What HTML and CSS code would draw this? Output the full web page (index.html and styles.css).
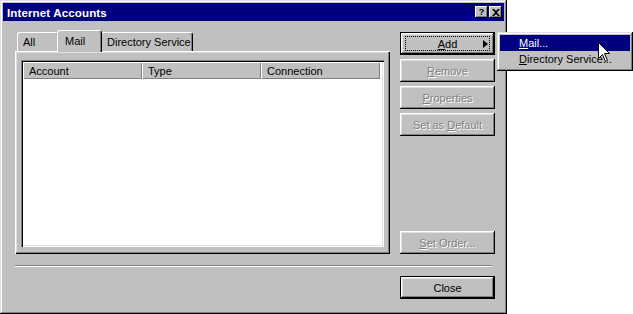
FILE: index.html
```html
<!DOCTYPE html>
<html>
<head>
<meta charset="utf-8">
<link rel="stylesheet" href="styles.css">
</head>
<body>
<div class="window">
  <div class="titlebar">
    <span class="title">Internet Accounts</span>
    <div class="caption-btns">
      <span class="cap-btn">?</span>
      <span class="cap-btn close-x">
        <svg width="8" height="7" viewBox="0 0 8 7"><path d="M0 0h2l2 2 2-2h2L5 3.5 8 7H6L4 5 2 7H0l3-3.5z" fill="#000"/></svg>
      </span>
    </div>
  </div>
  <div class="content">
    <div class="top">
      <div class="tabs-col">
        <div class="tabstrip">
          <div class="tab tab-all">All</div>
          <div class="tab tab-mail active">Mail</div>
          <div class="tab tab-dir">Directory Service</div>
        </div>
        <div class="panel">
          <div class="list">
            <div class="header">
              <div class="hcell c1">Account</div>
              <div class="hcell c2">Type</div>
              <div class="hcell c3">Connection</div>
            </div>
          </div>
        </div>
      </div>
      <div class="btn-col">
        <div class="btn default">
          <div class="focus add-focus">
            <span></span>
            <span class="label"><u>A</u>dd</span>
            <span class="arrow"></span>
          </div>
        </div>
        <div class="btn disabled"><span class="label"><u>R</u>emove</span></div>
        <div class="btn disabled"><span class="label"><u>P</u>roperties</span></div>
        <div class="btn disabled"><span class="label">Set as <u>D</u>efault</span></div>
        <div class="btn disabled bottom-btn"><span class="label"><u>S</u>et Order...</span></div>
      </div>
    </div>
    <div class="separator"></div>
    <div class="footer">
      <div class="btn default"><span class="label">Close</span></div>
    </div>
  </div>
</div>

<div class="menu">
  <div class="item selected"><u>M</u>ail...</div>
  <div class="item"><u>D</u>irectory Service...</div>
</div>

<svg class="cursor" width="13" height="21" viewBox="0 0 13 21">
  <path d="M0.5 0.5 V16.5 L4.5 12.5 L7.5 19.5 L9.5 18.5 L6.5 11.5 H11.5 Z" fill="#fff" stroke="#000" stroke-width="1"/>
</svg>
</body>
</html>
```

FILE: styles.css
```css
html, body {
  margin: 0;
  padding: 0;
  background: #ffffff;
}

body {
  width: 633px;
  height: 314px;
  position: relative;
  overflow: hidden;
  font-family: "Liberation Sans", Arial, sans-serif;
  font-size: 11px;
  color: #000;
}

.window {
  width: 507px;
  height: 314px;
  box-sizing: border-box;
  background: #c0c0c0;
  padding: 3px;
  box-shadow: inset -1px -1px #000, inset 1px 1px #dfdfdf, inset -2px -2px #808080, inset 2px 2px #fff;
  display: flex;
  flex-direction: column;
}

.titlebar {
  height: 18px;
  background: #000080;
  color: #fff;
  display: flex;
  align-items: center;
  justify-content: space-between;
  padding: 0 2px 0 4px;
  flex: none;
}

.title {
  font-weight: bold;
  font-size: 11.6px;
  letter-spacing: 0.1px;
}

.caption-btns {
  display: flex;
  gap: 1px;
}

.cap-btn {
  width: 13px;
  height: 12px;
  background: #c0c0c0;
  box-shadow: inset -1px -1px #000, inset 1px 1px #fff, inset -2px -2px #808080;
  color: #000;
  font-weight: bold;
  font-size: 9px;
  line-height: 12px;
  text-align: center;
  display: flex;
  align-items: center;
  justify-content: center;
}

.content {
  padding: 9px 9px 0 12px;
  display: flex;
  flex-direction: column;
}

.top {
  display: flex;
  gap: 10px;
  height: 224px;
}

.tabs-col {
  width: 375px;
  display: flex;
  flex-direction: column;
}

.tabstrip {
  height: 21px;
  display: flex;
  align-items: flex-end;
  padding-left: 2px;
  position: relative;
  z-index: 1;
}

.tab {
  height: 19px;
  box-sizing: border-box;
  padding: 0 0 0 5px;
  display: flex;
  align-items: center;
  border-top: 1px solid #fff;
  border-left: 1px solid #fff;
  border-right: 1px solid #000;
  border-radius: 3px 3px 0 0;
  box-shadow: inset -1px 0 #808080;
  background: #c0c0c0;
}

.tab-all { width: 42px; }
.tab-dir { width: 93px; padding-left: 6px; }

.tab.active {
  width: 45px;
  height: 22px;
  margin: 0 -2px -1px -2px;
  padding: 0 0 1px 7px;
  position: relative;
  z-index: 2;
}

.panel {
  height: 203px;
  box-sizing: border-box;
  padding: 9px 6px 7px 6px;
  box-shadow: inset 1px 1px #fff, inset -1px -1px #000, inset -2px -2px #808080, inset 2px 2px #dfdfdf;
  display: flex;
}

.list {
  flex: 1;
  background: #fff;
  box-sizing: border-box;
  padding: 2px;
  box-shadow: inset 1px 1px #808080, inset 2px 2px #000, inset -1px -1px #fff, inset -2px -2px #dfdfdf;
}

.header {
  display: flex;
  height: 17px;
}

.hcell {
  box-sizing: border-box;
  height: 17px;
  background: #c0c0c0;
  box-shadow: inset 1px 1px #fff, inset -1px -1px #808080;
  padding-left: 6px;
  display: flex;
  align-items: center;
}

.c1 { width: 119px; }
.c2 { width: 119px; }
.c3 { width: 119px; }

.btn-col {
  width: 95px;
  display: flex;
  flex-direction: column;
  gap: 4px;
  padding-top: 2px;
}

.btn {
  width: 95px;
  height: 23px;
  box-sizing: border-box;
  background: #c0c0c0;
  box-shadow: inset -1px -1px #000, inset 1px 1px #fff, inset -2px -2px #808080, inset 2px 2px #dfdfdf;
  display: flex;
  align-items: center;
  justify-content: center;
  flex: none;
}

.btn.default {
  border: 1px solid #000;
}

.btn.disabled {
  color: #808080;
  text-shadow: 1px 1px #fff;
}

.bottom-btn {
  margin-top: auto;
}

.focus {
  box-sizing: border-box;
  width: 85px;
  height: 15px;
  border: 1px dotted #000;
}

.add-focus {
  display: grid;
  grid-template-columns: 1fr auto 1fr;
  align-items: center;
}

.arrow {
  justify-self: end;
  margin-right: 1px;
  width: 0;
  height: 0;
  border-top: 4px solid transparent;
  border-bottom: 4px solid transparent;
  border-left: 5px solid #000;
}

.separator {
  margin-top: 11px;
  margin-right: 3px;
  height: 2px;
  box-sizing: border-box;
  border-top: 1px solid #808080;
  border-bottom: 1px solid #fff;
}

.footer {
  margin-top: 9px;
  display: flex;
  justify-content: flex-end;
}

.menu {
  position: absolute;
  left: 497px;
  top: 32px;
  width: 136px;
  height: 39px;
  box-sizing: border-box;
  background: #c0c0c0;
  padding: 3px 3px;
  box-shadow: inset -1px -1px #000, inset 1px 1px #dfdfdf, inset -2px -2px #808080, inset 2px 2px #fff;
}

.item {
  height: 16px;
  padding-left: 19px;
  display: flex;
  align-items: center;
  white-space: nowrap;
}

.item.selected {
  background: #000080;
  color: #fff;
}

.cursor {
  position: absolute;
  left: 598px;
  top: 42px;
}
```
